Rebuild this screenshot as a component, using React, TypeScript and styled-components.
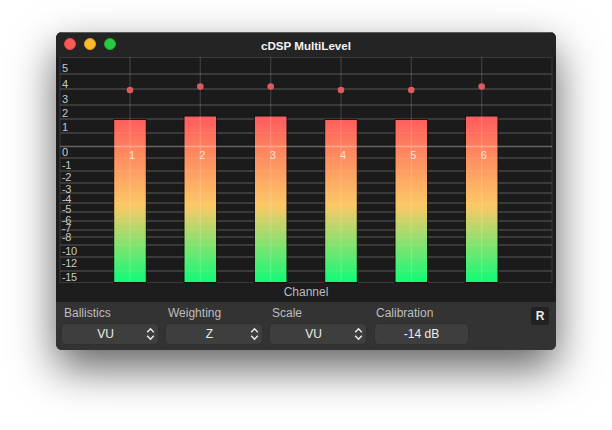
import styled, { createGlobalStyle } from "styled-components";

const GlobalStyle = createGlobalStyle`
  html, body {
    margin: 0;
    background: #ffffff;
  }
  body {
    font-family: "Liberation Sans", Arial, sans-serif;
  }
`;

const grid = [74, 89, 105, 119, 133, 158, 171, 183, 193, 203, 212, 221, 230, 237, 245, 257, 271];

const scale = [
  { text: "5", y: 72 },
  { text: "4", y: 88 },
  { text: "3", y: 103 },
  { text: "2", y: 117 },
  { text: "1", y: 131 },
  { text: "0", y: 156 },
  { text: "-1", y: 169 },
  { text: "-2", y: 181 },
  { text: "-3", y: 193 },
  { text: "-4", y: 203 },
  { text: "-5", y: 213 },
  { text: "-6", y: 224 },
  { text: "-7", y: 232 },
  { text: "-8", y: 241 },
  { text: "-10", y: 255 },
  { text: "-12", y: 267 },
  { text: "-15", y: 281 },
];

const channels = [
  { n: 1, x: 130, top: 119.5, peak: 90 },
  { n: 2, x: 200.3, top: 116, peak: 86.5 },
  { n: 3, x: 270.7, top: 116, peak: 86.5 },
  { n: 4, x: 341, top: 119.5, peak: 90 },
  { n: 5, x: 411.3, top: 119.5, peak: 90 },
  { n: 6, x: 481.7, top: 116, peak: 86.5 },
];

const controls = [
  { label: "Ballistics", value: "VU" },
  { label: "Weighting", value: "Z" },
  { label: "Scale", value: "VU" },
];

function Updown() {
  return (
    <Stepper width="9" height="14" viewBox="0 0 9 14">
      <path d="M1.2 5.2 4.5 1.8l3.3 3.4M1.2 8.8l3.3 3.4 3.3-3.4" />
    </Stepper>
  );
}

function Chart() {
  return (
    <ChartSvg width="500" height="227" viewBox="56 57 500 227">
      <defs>
        <linearGradient id="level" gradientUnits="userSpaceOnUse" x1="0" y1="116" x2="0" y2="282">
          <stop offset="0" stopColor="#ff5a5c" />
          <stop offset="0.54" stopColor="#fcc866" />
          <stop offset="1" stopColor="#10fb78" />
        </linearGradient>
      </defs>
      <rect x="60" y="57.5" width="492" height="225" fill="#1b1b1b" stroke="#3a3a3a" />
      {grid.map((y) => (
        <line key={y} x1="60" x2="552" y1={y} y2={y} stroke="#3c3c3c" strokeWidth="1.5" />
      ))}
      {channels.map((c) => (
        <rect
          key={c.n}
          x={c.x - 16.3}
          y={c.top}
          width="32.6"
          height={282.5 - c.top}
          fill="url(#level)"
          stroke="#0e0e0e"
        />
      ))}
      {grid.map((y) => (
        <line key={y} x1="60" x2="552" y1={y} y2={y} stroke="#fff" strokeOpacity="0.05" strokeWidth="1.5" />
      ))}
      {channels.map((c) => (
        <g key={c.n}>
          <line x1={c.x} x2={c.x} y1="57" y2="282" stroke="#fff" strokeOpacity="0.16" strokeWidth="1.2" />
          <circle cx={c.x} cy={c.peak} r="3.3" fill="#dc5b60" />
          <text x={c.x + 2} y="159" fontSize="11" fill="#ffffff" fillOpacity="0.75" textAnchor="middle">
            {c.n}
          </text>
        </g>
      ))}
      <line x1="60" x2="552" y1="146.5" y2="146.5" stroke="#fff" strokeOpacity="0.32" strokeWidth="1.5" />
      {scale.map((s) => (
        <text key={s.text} x="62" y={s.y} fontSize="11" letterSpacing="-0.4" fill="#c8c8c8">
          {s.text}
        </text>
      ))}
    </ChartSvg>
  );
}

export default function App() {
  return (
    <Page>
      <GlobalStyle />
      <Window>
        <TitleBar>
          <Lights>
            <Light $color="#fc5b57" $edge="#df4744" />
            <Light $color="#fdbb2e" $edge="#de9f23" />
            <Light $color="#2acb42" $edge="#1eaa30" />
          </Lights>
          <Title>cDSP MultiLevel</Title>
        </TitleBar>
        <ChartArea>
          <Chart />
          <AxisLabel>Channel</AxisLabel>
        </ChartArea>
        <Panel>
          {controls.map((c) => (
            <Field key={c.label}>
              <FieldLabel>{c.label}</FieldLabel>
              <Select>
                <SelectValue>{c.value}</SelectValue>
                <Updown />
              </Select>
            </Field>
          ))}
          <WideField>
            <FieldLabel $inset={1}>Calibration</FieldLabel>
            <Readout>-14 dB</Readout>
          </WideField>
          <ResetButton>R</ResetButton>
        </Panel>
      </Window>
    </Page>
  );
}

const Page = styled.div`
  width: 612px;
  height: 430px;
  box-sizing: border-box;
  padding: 32px 56px 0;
  overflow: hidden;
`;

const Window = styled.div`
  width: 500px;
  height: 318px;
  border-radius: 6px;
  overflow: hidden;
  background: #1d1d1d;
  display: flex;
  flex-direction: column;
  box-shadow: 0 18px 44px rgba(0, 0, 0, 0.62);
`;

const TitleBar = styled.div`
  position: relative;
  flex: none;
  height: 25px;
  display: flex;
  align-items: center;
  justify-content: center;
  background: #242424;
  border-top: 1px solid #5a5a5a;
  box-sizing: border-box;
`;

const Lights = styled.div`
  position: absolute;
  left: 8px;
  top: 5px;
  display: flex;
  gap: 8px;
`;

const Light = styled.span<{ $color: string; $edge: string }>`
  width: 12px;
  height: 12px;
  box-sizing: border-box;
  border-radius: 50%;
  background: ${(p) => p.$color};
  border: 1px solid ${(p) => p.$edge};
`;

const Title = styled.div`
  color: #f4f4f4;
  font-size: 11.6px;
  font-weight: 700;
`;

const ChartArea = styled.div`
  flex: none;
  height: 245px;
  display: flex;
  flex-direction: column;
  align-items: center;
`;

const ChartSvg = styled.svg`
  display: block;
  flex: none;
  font-family: "Liberation Sans", Arial, sans-serif;
`;

const AxisLabel = styled.div`
  color: #bcbcbc;
  font-size: 12px;
  line-height: 17px;
`;

const Panel = styled.div`
  position: relative;
  flex: 1;
  display: flex;
  gap: 8px;
  padding: 4px 6px 0;
  background: #333333;
`;

const Field = styled.div`
  width: 96px;
  display: flex;
  flex-direction: column;
`;

const WideField = styled(Field)`
  width: 93px;
  margin-left: 1px;
`;

const FieldLabel = styled.div<{ $inset?: number }>`
  color: #bdbdbd;
  font-size: 12px;
  line-height: 14px;
  padding-left: ${(p) => p.$inset ?? 2}px;
  margin-bottom: 4px;
`;

const Select = styled.div`
  height: 20px;
  display: flex;
  align-items: center;
  padding-right: 3px;
  border-radius: 4px;
  background: #3e3e3e;
  box-shadow: 0 0 0 1px #2f2f2f;
`;

const SelectValue = styled.span`
  flex: 1;
  padding-left: 3px;
  text-align: center;
  color: #ececec;
  font-size: 12px;
`;

const Stepper = styled.svg`
  fill: none;
  stroke: #ececec;
  stroke-width: 1.5;
`;

const Readout = styled(Select)`
  justify-content: center;
  padding: 0;
  color: #ececec;
  font-size: 12px;
`;

const ResetButton = styled.div`
  position: absolute;
  right: 7px;
  top: 5px;
  width: 18px;
  height: 18px;
  border-radius: 3px;
  display: flex;
  align-items: center;
  justify-content: center;
  background: #222222;
  color: #ededed;
  font-size: 12px;
  font-weight: 700;
`;
